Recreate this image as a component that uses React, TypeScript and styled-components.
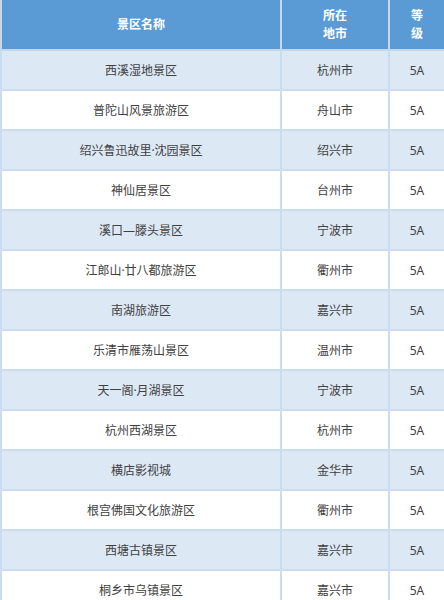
import React from 'react';
import styled, { createGlobalStyle } from 'styled-components';

const GlobalStyle = createGlobalStyle`
  html, body {
    margin: 0;
    padding: 0;
    background: #ffffff;
  }
  body {
    font-family: "Noto Sans", "Noto Sans CJK SC", sans-serif;
  }
`;

const Table = styled.table`
  width: 444px;
  border-collapse: collapse;
  table-layout: fixed;
  font-size: 12px;
  color: #404040;
`;

const HeadCell = styled.th`
  background: #5b9bd5;
  color: #ffffff;
  font-weight: 700;
  height: 49px;
  padding: 0 14px;
  line-height: 18px;
  text-align: center;
  border: 2px solid #c4d8ee;
  border-top: none;
`;

const Row = styled.tr<{ $shaded: boolean }>`
  background: ${(p) => (p.$shaded ? '#dde8f5' : '#ffffff')};
`;

const Cell = styled.td`
  height: 38px;
  padding: 0;
  text-align: center;
  border: 2px solid #c9dcf0;
`;

const spots = [
  ['西溪湿地景区', '杭州市'],
  ['普陀山风景旅游区', '舟山市'],
  ['绍兴鲁迅故里·沈园景区', '绍兴市'],
  ['神仙居景区', '台州市'],
  ['溪口—滕头景区', '宁波市'],
  ['江郎山·廿八都旅游区', '衢州市'],
  ['南湖旅游区', '嘉兴市'],
  ['乐清市雁荡山景区', '温州市'],
  ['天一阁·月湖景区', '宁波市'],
  ['杭州西湖景区', '杭州市'],
  ['横店影视城', '金华市'],
  ['根宫佛国文化旅游区', '衢州市'],
  ['西塘古镇景区', '嘉兴市'],
  ['桐乡市乌镇景区', '嘉兴市'],
];

export default function App() {
  return (
    <>
      <GlobalStyle />
      <Table>
        <colgroup>
          <col style={{ width: 280 }} />
          <col style={{ width: 108 }} />
          <col style={{ width: 56 }} />
        </colgroup>
        <thead>
          <tr>
            <HeadCell>景区名称</HeadCell>
            <HeadCell>所在<br />地市</HeadCell>
            <HeadCell>等<br />级</HeadCell>
          </tr>
        </thead>
        <tbody>
          {spots.map(([name, city], i) => (
            <Row key={name} $shaded={i % 2 === 0}>
              <Cell>{name}</Cell>
              <Cell>{city}</Cell>
              <Cell>5A</Cell>
            </Row>
          ))}
        </tbody>
      </Table>
    </>
  );
}
